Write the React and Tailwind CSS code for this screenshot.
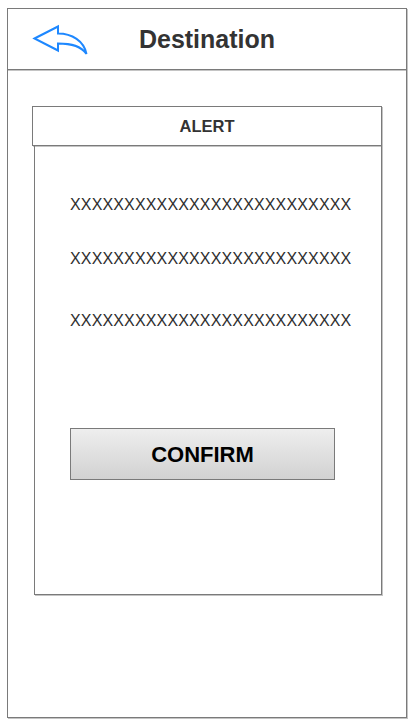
import React from 'react';

const BackIcon = () => (
    <svg width="56" height="32" viewBox="30 23 56 32" fill="none">
        <path
            d="M32.5 37.5 L56 25.5 L56 32.5 C70 32.5 82 40 84.5 53 C79 45 70 42.5 56 42.5 L56 49.5 Z"
            stroke="#1e88ff"
            strokeWidth="2"
            strokeLinejoin="miter"
        />
    </svg>
);

const App = () => {
    const line = 'XXXXXXXXXXXXXXXXXXXXXXXXXX';

    return (
        <div className="w-[413px] h-[727px] bg-white pt-[8px] pl-[7px]" style={{ fontFamily: '"Liberation Sans", Arial, sans-serif' }}>
            <div className="w-[400px] h-[710px] border border-[#7a7a7a] shadow-[1px_1px_0_#c4c4c4] flex flex-col">
                {/* HEADER */}
                <div className="h-[61px] border-b border-[#7a7a7a] shadow-[0_1px_0_#c4c4c4] grid grid-cols-[1fr_auto_1fr] items-center">
                    <div className="pl-[24px] pt-[1px] flex items-center">
                        <BackIcon />
                    </div>
                    <h1 className="text-[25px] font-bold text-[#333333] leading-none pt-[1px]">Destination</h1>
                    <div />
                </div>

                {/* ALERT */}
                <div className="ml-[24px] mt-[36px] w-[350px] flex flex-col">
                    <div className="h-[40px] border border-[#7a7a7a] shadow-[1px_1px_0_#c4c4c4] flex items-center justify-center">
                        <span className="text-[16.5px] font-bold text-[#333333]">ALERT</span>
                    </div>
                    <div className="ml-[2px] w-[348px] h-[449px] border-x border-b border-[#7a7a7a] shadow-[1px_1px_0_#c4c4c4] flex flex-col pl-[35px]">
                        <div className="mt-[50px] text-[16px] tracking-[0.15px] text-[#2e2e2e] leading-[18px]">{line}</div>
                        <div className="mt-[36px] text-[16px] tracking-[0.15px] text-[#2e2e2e] leading-[18px]">{line}</div>
                        <div className="mt-[44px] text-[16px] tracking-[0.15px] text-[#2e2e2e] leading-[18px]">{line}</div>
                        <button className="mt-[98px] w-[265px] h-[52px] border border-[#7a7a7a] bg-gradient-to-b from-[#eeeeee] to-[#d2d2d2] flex items-center justify-center">
                            <span className="text-[22px] font-bold text-black">CONFIRM</span>
                        </button>
                    </div>
                </div>
            </div>
        </div>
    );
};

export default App;
